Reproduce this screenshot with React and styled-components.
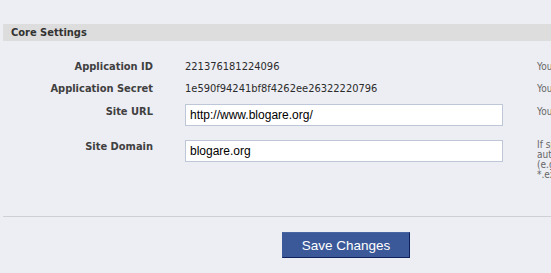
import React from 'react'
import styled, { createGlobalStyle } from 'styled-components'

const GlobalStyle = createGlobalStyle`
  html, body {
    margin: 0;
    padding: 0;
    background: #ffffff;
    overflow: hidden;
  }
`

const Page = styled.div`
  width: 551px;
  height: 273px;
  overflow: hidden;
  font-family: 'DejaVu Sans Condensed', 'DejaVu Sans', sans-serif;
  font-size: 11px;
`

const Panel = styled.div`
  width: 700px;
  background: #edeef4;
  padding-top: 24px;
  border-bottom: 1px solid #dcdee6;
`

const SectionHeader = styled.h3`
  margin: 0 0 0 3px;
  height: 17px;
  padding-left: 8px;
  background: #dddddd;
  color: #333333;
  font-size: 11px;
  font-weight: bold;
  line-height: 17px;
`

const Form = styled.div`
  padding-top: 19px;
`

const Row = styled.div`
  display: grid;
  grid-template-columns: 153px 318px 200px;
  column-gap: 32px;
  align-items: start;
  margin-top: ${p => p.$gap || 0}px;
`

const Label = styled.div`
  text-align: right;
  font-weight: bold;
  color: #404040;
  line-height: 14px;
  padding-top: ${p => p.$pad || 0}px;
`

const Value = styled.div`
  color: #2b2b2b;
  line-height: 14px;
`

const Help = styled.div`
  margin-left: 2px;
  color: #666666;
  font-size: 10px;
  line-height: ${p => p.$tight ? 10 : 14}px;
  padding-top: ${p => p.$pad || 0}px;
  white-space: nowrap;
`

const TextInput = styled.input`
  box-sizing: border-box;
  width: 318px;
  height: 22px;
  margin: 0;
  padding: 0 4px;
  border: 1px solid #bdc7d8;
  background: #ffffff;
  color: #000000;
  font-family: 'Liberation Sans', Arial, sans-serif;
  font-size: 12px;
  outline: none;
`

const Footer = styled.div`
  margin: 36px 0 0 3px;
  border-top: 1px solid #cfcfd4;
  padding: 15px 0 21px 279px;
`

const SaveButton = styled.button`
  box-sizing: border-box;
  width: 128px;
  height: 26px;
  margin: 0;
  padding: 0;
  background: #3b5998;
  border: 1px solid;
  border-color: #4a66a0 #0e1f5b #0e1f5b #3b5998;
  color: #ffffff;
  font-family: 'Liberation Sans', Arial, sans-serif;
  font-size: 13.5px;
  cursor: pointer;
`

const BottomRule = styled.div`
  height: 8px;
  border-bottom: 1px solid #c9c9c9;
`

const App = () => (
  <Page>
    <GlobalStyle />
    <Panel>
      <SectionHeader>Core Settings</SectionHeader>
      <Form>
        <Row>
          <Label>Application ID</Label>
          <Value>221376181224096</Value>
          <Help>Your OAuth client_id</Help>
        </Row>
        <Row $gap={8}>
          <Label>Application Secret</Label>
          <Value>1e590f94241bf8f4262ee26322220796</Value>
          <Help>Your OAuth client_secret</Help>
        </Row>
        <Row $gap={8}>
          <Label $pad={1}>Site URL</Label>
          <TextInput defaultValue="http://www.blogare.org/" />
          <Help $pad={1}>Your site's URL</Help>
        </Row>
        <Row $gap={14}>
          <Label>Site Domain</Label>
          <TextInput defaultValue="blogare.org" />
          <Help $tight>
            If specified, Facebook will allow
            <br />
            authentication for this domain and its subdomains
            <br />
            (e.g. if you enter example.com, then
            <br />
            *.example.com will also be allowed)
          </Help>
        </Row>
      </Form>
      <Footer>
        <SaveButton>Save Changes</SaveButton>
      </Footer>
    </Panel>
    <BottomRule />
  </Page>
)

export default App
